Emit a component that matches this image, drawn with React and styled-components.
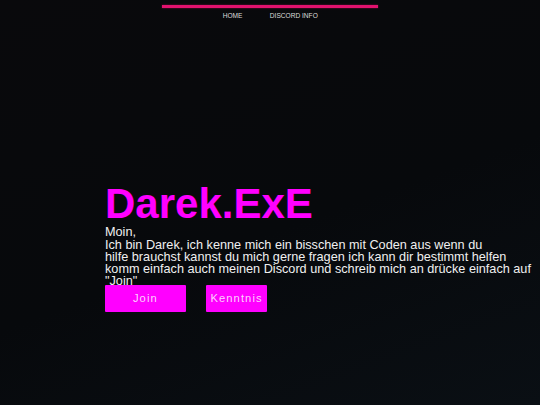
import React from "react";
import styled, { createGlobalStyle } from "styled-components";

const GlobalStyle = createGlobalStyle`
  html, body {
    margin: 0;
    padding: 0;
  }
  body {
    background: linear-gradient(160deg, #09090c 0%, #07090c 55%, #0a0f14 100%);
    min-height: 100vh;
    font-family: "Liberation Sans", Arial, sans-serif;
    color: #e8e8e8;
  }
`;

const Page = styled.div`
  min-height: 405px;
  width: 100%;
`;

const Nav = styled.nav`
  display: flex;
  flex-direction: column;
  align-items: center;
`;

const NavLine = styled.div`
  width: 40%;
  height: 2.5px;
  margin-top: 5px;
  background-color: #e3126f;
  box-shadow: 0 0 2px rgba(227, 18, 111, 0.6);
`;

const NavLinks = styled.div`
  display: flex;
  gap: 27.3px;
  margin-top: 4.8px;
  padding-left: 0.5px;
`;

const NavLink = styled.a`
  font-size: 6.6px;
  color: #dddddd;
  text-decoration: none;
  text-transform: uppercase;
  cursor: pointer;
`;

const Hero = styled.section`
  padding: 163px 0 0 105px;
`;

const Title = styled.h1`
  margin: 0;
  font-size: 42px;
  line-height: 44px;
  font-weight: 700;
  color: #ff00ff;
`;

const Text = styled.p`
  margin: 0;
  height: 58.3px;
  font-size: 12.7px;
  line-height: 12.3px;
  white-space: nowrap;
  color: #f0f0f0;
`;

const Buttons = styled.div`
  display: flex;
  gap: 20.7px;
`;

const Button = styled.button`
  position: relative;
  height: 27px;
  width: ${(p) => (p.$wide ? "80.7px" : "auto")};
  padding: 0 4px;
  border: none;
  border-radius: 1px;
  background-color: #ff00ff;
  color: #fcd2fc;
  font-family: "Liberation Sans", Arial, sans-serif;
  font-size: 11.2px;
  letter-spacing: 1.1px;
  cursor: pointer;
`;

const App = () => {
  return (
    <Page>
      <GlobalStyle />
      <Nav>
        <NavLine />
        <NavLinks>
          <NavLink>Home</NavLink>
          <NavLink>Discord Info</NavLink>
        </NavLinks>
      </Nav>
      <Hero>
        <Title>Darek.ExE</Title>
        <Text>
          Moin,
          <br />
          Ich bin Darek, ich kenne mich ein bisschen mit Coden aus wenn du
          <br />
          hilfe brauchst kannst du mich gerne fragen ich kann dir bestimmt helfen
          <br />
          komm einfach auch meinen Discord und schreib mich an drücke einfach auf
          <br />
          "Join"
        </Text>
        <Buttons>
          <Button $wide>Join</Button>
          <Button>Kenntnis</Button>
        </Buttons>
      </Hero>
    </Page>
  );
};

export default App;
